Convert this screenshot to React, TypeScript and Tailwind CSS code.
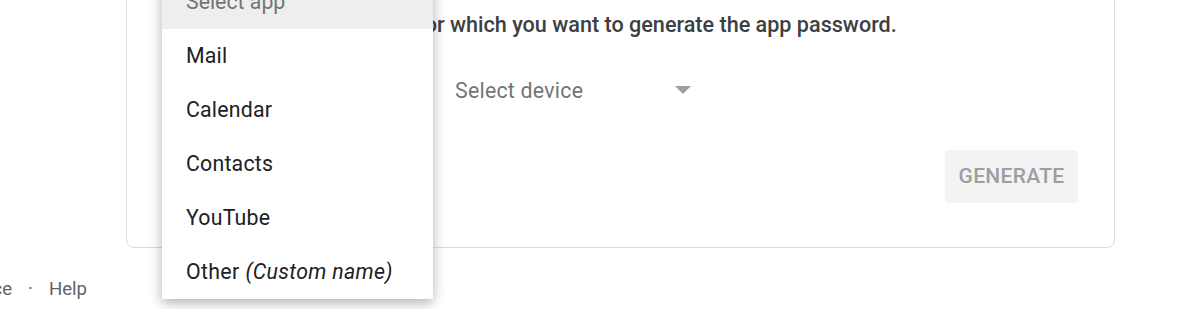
const APPS = ['Mail', 'Calendar', 'Contacts', 'YouTube'];

export default function App() {
  return (
    <div className="relative h-[309px] w-[1179px] overflow-hidden bg-white font-['Roboto',sans-serif]">
      <div className="mt-[-60px] ml-[126px] w-[989px] rounded-[8px] border border-[#dadce0] pt-[70px] pb-[44px]">
        <p className="pl-[38px] h-[28px] leading-[28px] whitespace-nowrap text-[21.6px] font-medium text-[#3c4043]">
          Select the app and device for which you want to generate the app password.
        </p>
        <div className="mt-[25px] flex pl-[35px]">
          <FakeSelect label="Select app" />
          <FakeSelect label="Select device" />
        </div>
        <div className="mt-[32px] flex justify-end pr-[36px]">
          <button
            disabled
            className="h-[53px] w-[133px] rounded-[4px] bg-[#f3f3f3] text-[21px] font-medium uppercase tracking-[0.015em] text-[#9e9e9e]"
          >
            Generate
          </button>
        </div>
      </div>

      <footer className="mt-[29px] flex w-[87px] justify-end whitespace-nowrap text-[18.6px] leading-[24px] text-[#5f6368]">
        <span>Terms of Service</span>
        <span className="px-[16px]">·</span>
        <span>Help</span>
      </footer>

      <AppMenu />
    </div>
  );
}

function FakeSelect({ label }: { label: string }) {
  return (
    <div className="flex h-[54px] w-[269px] items-center justify-between pl-[24px] pr-[9px]">
      <span className="text-[21.3px] tracking-[0.012em] text-[#757575]">{label}</span>
      <svg width="16" height="8" viewBox="0 0 16 8" className="mb-[2px]">
        <path d="M0 0 L16 0 L8 8 Z" fill="#9e9e9e" />
      </svg>
    </div>
  );
}

// open dropdown overlaying the "Select app" control
function AppMenu() {
  return (
    <div className="absolute left-[162px] top-[-25px] w-[271px] bg-white shadow-[0_4px_12px_rgba(0,0,0,0.3)]">
      <div className="flex h-[54px] items-center bg-[#eeeeee] px-[24px] text-[21.3px] text-[#757575]">
        Select app
      </div>
      {APPS.map((app) => (
        <div key={app} className="flex h-[54px] items-center px-[24px] text-[21.3px] tracking-[0.01em] text-[#202124]">
          {app}
        </div>
      ))}
      <div className="flex h-[54px] items-center gap-[6px] px-[24px] text-[21.3px] tracking-[0.015em] text-[#202124]">
        Other <i>(Custom name)</i>
      </div>
    </div>
  );
}
